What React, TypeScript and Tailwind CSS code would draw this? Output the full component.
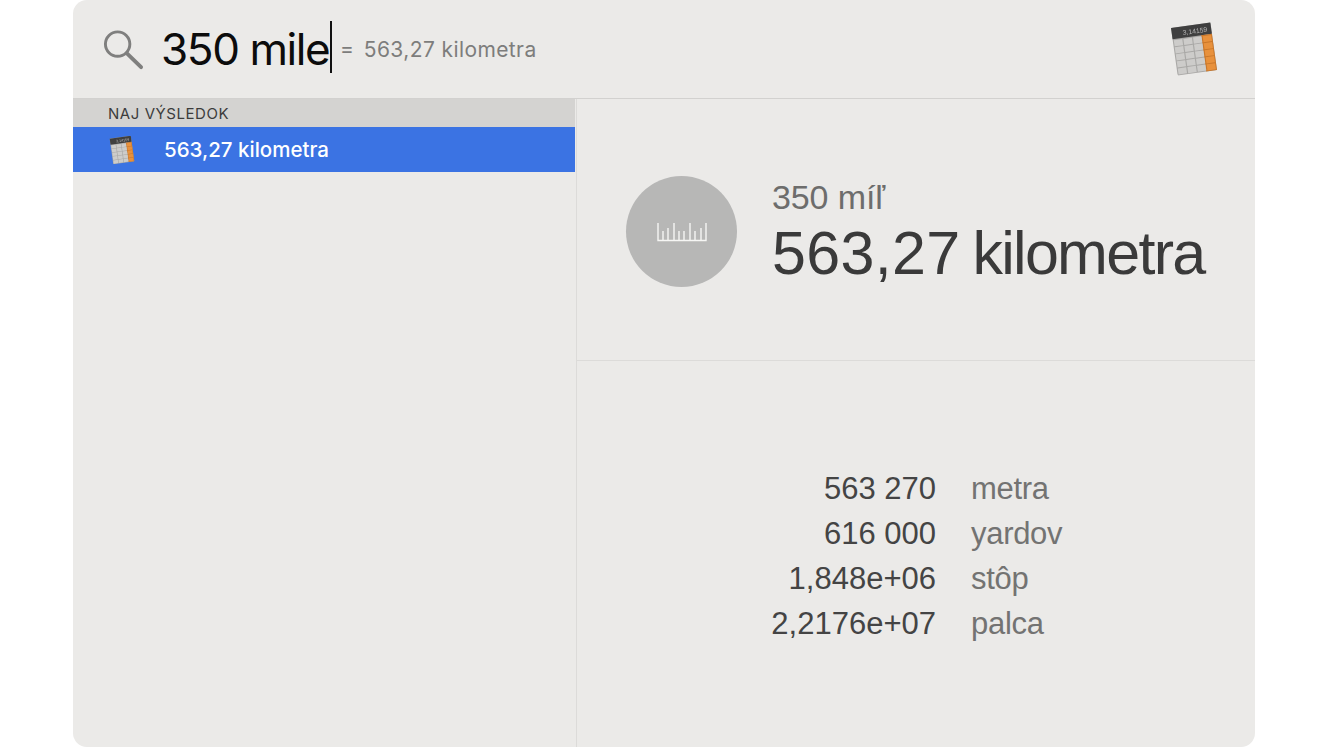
const Calc = ({ className }: { className: string }) => (
  <svg viewBox="0 0 44 50" className={className}>
    <g transform="rotate(-8 22 25)">
      <rect x="3" y="2" width="38" height="46" rx="1.5" fill="#a9a8a6" />
      <rect x="3" y="2" width="38" height="11" fill="#3f3f3f" />
      <text x="37" y="10.3" textAnchor="end" fontSize="6.5" fill="#b9b9b9" fontFamily="Liberation Sans, sans-serif">3,14159</text>
      <rect x="30.5" y="13" width="10.5" height="35" fill="#c9772a" />
      {[0, 1, 2, 3, 4].map((r) =>
        [0, 1, 2, 3].map((c) => (
          <rect key={`${r}${c}`} x={4 + c * 9.3} y={14 + r * 6.8} width="8.2" height="5.9" fill={c === 3 ? "#e8913c" : "#cdccca"} />
        ))
      )}
    </g>
  </svg>
);

export default function App() {
  return (
    <div className="h-[747px] w-[1328px] bg-white px-[73px] font-['Inter','Liberation_Sans',sans-serif]">
      <div className="flex h-[747px] flex-col overflow-hidden rounded-[14px] bg-[#ebeae8]">
        <header className="flex h-[99px] shrink-0 items-center border-b border-[#d2d1cf] pl-[29px] pr-[38px]">
          <svg viewBox="0 0 44 44" className="h-[44px] w-[43px] shrink-0">
            <circle cx="16" cy="17" r="12.5" fill="none" stroke="#7f7f7e" strokeWidth="3" />
            <path d="M25.5 26.5 L40 40.5" stroke="#7f7f7e" strokeWidth="4" strokeLinecap="round" />
          </svg>
          <span className="ml-[16px] text-[44px] leading-none tracking-[-1.4px] text-[#0c0c0c]">350 mile</span>
          <span className="ml-px mt-[-4px] h-[52px] w-[1.5px] bg-[#111]" />
          <span className="ml-[8px] text-[21px] text-[#7d7d7c]">=</span>
          <span className="ml-[10px] mt-[1px] text-[21px] tracking-[0.4px] text-[#7d7d7c]">563,27 kilometra</span>
          <Calc className="ml-auto h-[54px] w-[46px] blur-[0.4px]" />
        </header>
        <div className="flex min-h-0 flex-1">
          <aside className="w-[504px] shrink-0 border-r border-[#dcdbd9] pr-px">
            <div className="flex h-[28px] items-center bg-[#d4d3d1] pl-[35px] pt-[2px] text-[15px] tracking-[0.55px] text-[#3c3c3c]">NAJ VÝSLEDOK</div>
            <div className="flex h-[45px] items-center bg-[#3b73e3] pl-[35px]">
              <Calc className="h-[28px] w-[28px] blur-[0.3px]" />
              <span className="ml-[28px] mt-[2px] text-[20.5px] font-medium text-white">563,27 kilometra</span>
            </div>
          </aside>
          <main className="flex min-w-0 flex-1 flex-col">
            <section className="flex h-[262px] shrink-0 items-center border-b border-[#dcdbd9] pl-[49px]">
              <div className="mt-[4px] flex h-[111px] w-[111px] shrink-0 items-center justify-center rounded-full bg-[#b7b7b6]">
                <svg viewBox="0 0 50 20" className="h-[20px] w-[50px]" fill="none" stroke="#f6f6f4" strokeWidth="1.4">
                  <path d="M1 1V18.5H49V1M6 9V18M11 6V18M17 1V18M22 9V18M27 9V18M33 1V18M38 9V18M44 6V18" />
                </svg>
              </div>
              <div className="ml-[35px] mt-[4px] flex flex-col font-['Liberation_Sans',sans-serif]">
                <span className="text-[34px] leading-[40px] tracking-[-0.1px] text-[#6d6d6c]">350 míľ</span>
                <span className="mt-[3px] flex gap-[12px] text-[61px] leading-[66px] text-[#3a3a3a]">
                  <span className="tracking-[0.3px]">563,27</span>
                  <span className="tracking-[-1.7px]">kilometra</span>
                </span>
              </div>
            </section>
            <section className="grid grid-cols-[359px_1fr] gap-x-[35px] pt-[105px] font-['Liberation_Sans',sans-serif] text-[31px] leading-[45px]">
              <span className="text-right text-[#444]">563 270</span><span className="tracking-[-0.3px] text-[#737372]">metra</span>
              <span className="text-right text-[#444]">616 000</span><span className="tracking-[-0.3px] text-[#737372]">yardov</span>
              <span className="text-right text-[#444]">1,848e+06</span><span className="tracking-[-0.3px] text-[#737372]">stôp</span>
              <span className="text-right text-[#444]">2,2176e+07</span><span className="tracking-[-0.3px] text-[#737372]">palca</span>
            </section>
          </main>
        </div>
      </div>
    </div>
  );
}
